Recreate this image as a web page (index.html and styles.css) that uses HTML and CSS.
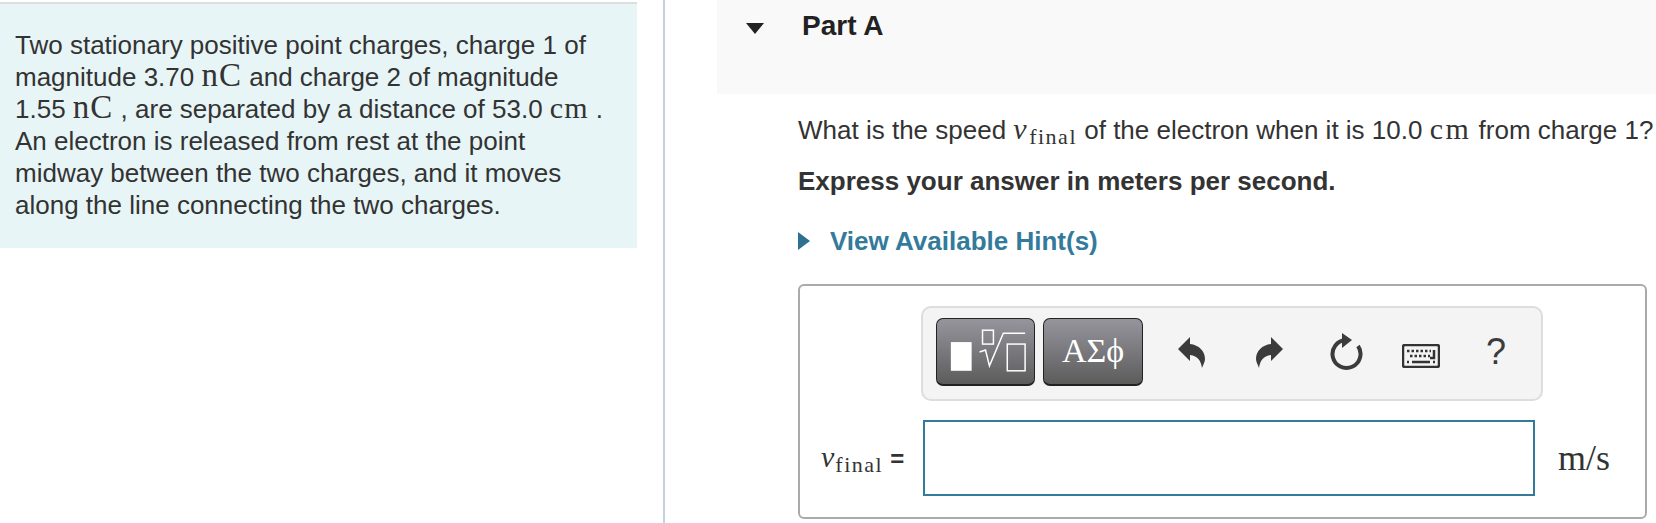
FILE: index.html
```html
<!DOCTYPE html>
<html lang="en">
<head>
    <meta charset="UTF-8">
    <meta name="viewport" content="width=device-width, initial-scale=1.0">
    <title>Part A</title>
    <link rel="stylesheet" href="styles.css">
</head>
<body>

<div class="page">
    <div class="left-col">
        <div class="intro">
            <p>Two stationary positive point charges, charge 1 of<br>
            magnitude 3.70 <span class="math big">nC</span> and charge 2 of magnitude<br>
            1.55 <span class="math big">nC</span> , are separated by a distance of 53.0 <span class="math">cm</span> .<br>
            An electron is released from rest at the point<br>
            midway between the two charges, and it moves<br>
            along the line connecting the two charges.</p>
        </div>
    </div>

    <div class="right-col">
        <div class="part-header">
            <span class="arrow-down"></span>
            <h2>Part A</h2>
        </div>

        <div class="part-body">
            <p class="question">What is the speed <span class="math"><i>v</i><sub>final</sub></span> of the electron when it is 10.0 <span class="math">cm</span> from charge 1?</p>
            <p class="express">Express your answer in meters per second.</p>
            <p class="hint"><span class="arrow-right"></span>View Available Hint(s)</p>

            <div class="answer-box">
                <div class="toolbar">
                    <button class="tool-btn">
                        <svg width="98" height="68" viewBox="0 0 98 68">
                            <rect x="14" y="25" width="21" height="29" fill="#fff"/>
                            <rect x="46" y="13" width="11" height="14" fill="none" stroke="#fff" stroke-width="1.500"/>
                            <path d="M43 35l6-2 4 16 14-33h22" fill="none" stroke="#fff" stroke-width="1.500"/>
                            <rect x="71" y="27" width="18" height="27" fill="none" stroke="#fff" stroke-width="1.500"/>
                        </svg>
                    </button>
                    <button class="tool-btn symbols">ΑΣϕ</button>

                    <div class="tool-icons">
                        <svg class="undo" width="28" height="32" viewBox="0 0 28 32">
                            <path d="M0 13L12 1v7c9 1 15 7 15 15 0 3-2 6-3 9-1-7-4-12-12-13v6z" fill="#3b3b3b"/>
                        </svg>
                        <svg class="redo" width="28" height="32" viewBox="0 0 28 32">
                            <path d="M28 13L16 1v7C7 9 1 15 1 23c0 3 2 6 3 9 1-7 4-12 12-13v6z" fill="#3b3b3b"/>
                        </svg>
                        <svg class="reload" width="34" height="38" viewBox="0 0 34 38">
                            <path d="M17 7a14 14 0 1 0 12 6" fill="none" stroke="#3b3b3b" stroke-width="4"/>
                            <path d="M13 0l10 7-10 8z" fill="#3b3b3b"/>
                        </svg>
                        <svg class="keyboard" width="38" height="24" viewBox="0 0 38 24">
                            <rect x="1" y="1" width="36" height="22" rx="2" fill="none" stroke="#333" stroke-width="2.500"/>
                            <path d="M5 7h24M8 12h20M5 18h2M31 18h2" fill="none" stroke="#333" stroke-width="2.500" stroke-dasharray="2.500 2"/>
                            <path d="M10 18h18M32 6v8h-4" fill="none" stroke="#333" stroke-width="2.500"/>
                        </svg>
                        <span class="help">?</span>
                    </div>
                </div>

                <div class="answer-row">
                    <label class="math answer-label"><i>v</i><sub>final</sub><span class="equals">=</span></label>
                    <div class="answer-input"></div>
                    <span class="math units">m/s</span>
                </div>
            </div>
        </div>
    </div>
</div>

</body>
</html>
```

FILE: styles.css
```css
* {
    margin: 0;
    padding: 0;
    box-sizing: border-box;
}

html, body {
    height: 523px;
    overflow: hidden;
}

body {
    font-family: "Liberation Sans", Arial, sans-serif;
    font-size: 26px;
    color: #333;
    background-color: #fff;
}

.page {
    display: flex;
    height: 523px;
}

.left-col {
    width: 717px;
    flex-shrink: 0;
    padding-top: 2px;
    background: linear-gradient(#c4d2e0, #c4d2e0) 663px 0 / 2px 100% no-repeat;
}

.intro {
    width: 637px;
    height: 246px;
    padding: 25px 15px 0;
    background-color: #e7f5f7;
    border-top: 2px solid #dedede;
    line-height: 32px;
    white-space: nowrap;
}

.math {
    font-family: "Liberation Serif", "Times New Roman", serif;
    font-size: 30px;
    letter-spacing: 1px;
    line-height: 0;
}

.math.big {
    font-size: 33px;
}

.math i {
    font-size: 30px;
}

.math sub {
    font-size: 22px;
    letter-spacing: 1.500px;
    line-height: 0;
    vertical-align: -5px;
}

.right-col {
    flex: 1;
    min-width: 0;
}

.part-header {
    display: flex;
    align-items: flex-start;
    height: 94px;
    padding: 12px 0 0 29px;
    background-color: #f9f9f9;
}

.arrow-down {
    width: 0;
    height: 0;
    margin-top: 11px;
    border-left: 9px solid transparent;
    border-right: 9px solid transparent;
    border-top: 11px solid #222;
}

.part-header h2 {
    margin-left: 38px;
    font-size: 28px;
    line-height: 28px;
    color: #222;
}

.part-body {
    padding: 20px 9px 0 81px;
}

.question {
    line-height: 32px;
    white-space: nowrap;
}

.question .math {
    letter-spacing: 2.500px;
}

.express {
    margin-top: 19px;
    font-weight: bold;
    line-height: 32px;
}

.hint {
    display: flex;
    align-items: center;
    margin-top: 28px;
    font-weight: bold;
    line-height: 32px;
    color: #337a9b;
}

.arrow-right {
    width: 0;
    height: 0;
    margin-right: 20px;
    border-top: 9px solid transparent;
    border-bottom: 9px solid transparent;
    border-left: 12px solid #2f6f8f;
}

.answer-box {
    height: 235px;
    margin-top: 27px;
    padding-top: 20px;
    border: 2px solid #aaa;
    border-radius: 6px;
}

.toolbar {
    display: flex;
    align-items: center;
    width: 622px;
    height: 95px;
    margin-left: 121px;
    padding: 0 0 4px 13px;
    background-color: #f4f4f4;
    border: 2px solid #ddd;
    border-radius: 10px;
}

.tool-btn {
    display: flex;
    align-items: center;
    justify-content: center;
    width: 99px;
    height: 68px;
    margin-right: 8px;
    background: linear-gradient(#96959d, #5c5c5c);
    border: 1px solid #222;
    border-bottom-width: 2px;
    border-radius: 7px;
    color: #fff;
}

.symbols {
    width: 100px;
    font-family: "Liberation Serif", "Times New Roman", serif;
    font-size: 34px;
}

.tool-icons {
    display: flex;
    align-items: center;
    margin-left: 27px;
}

.tool-icons svg {
    display: block;
}

.redo {
    margin-left: 49px;
}

.reload {
    margin-left: 46px;
}

.keyboard {
    margin: 8px 0 0 39px;
}

.help {
    margin-left: 46px;
    font-size: 36px;
    line-height: 36px;
    color: #3b3b3b;
}

.answer-row {
    display: flex;
    align-items: center;
    margin-top: 19px;
}

.answer-label {
    display: block;
    width: 123px;
    padding-left: 21px;
    white-space: nowrap;
    line-height: 32px;
}

.equals {
    margin-left: 7px;
    font-family: "Liberation Sans", Arial, sans-serif;
    font-size: 24px;
    font-weight: bold;
}

.answer-input {
    width: 612px;
    height: 76px;
    background-color: #fff;
    border: 2px solid #337a9b;
}

.units {
    margin-left: 23px;
    font-size: 36px;
    line-height: 40px;
    letter-spacing: 0;
}
```
